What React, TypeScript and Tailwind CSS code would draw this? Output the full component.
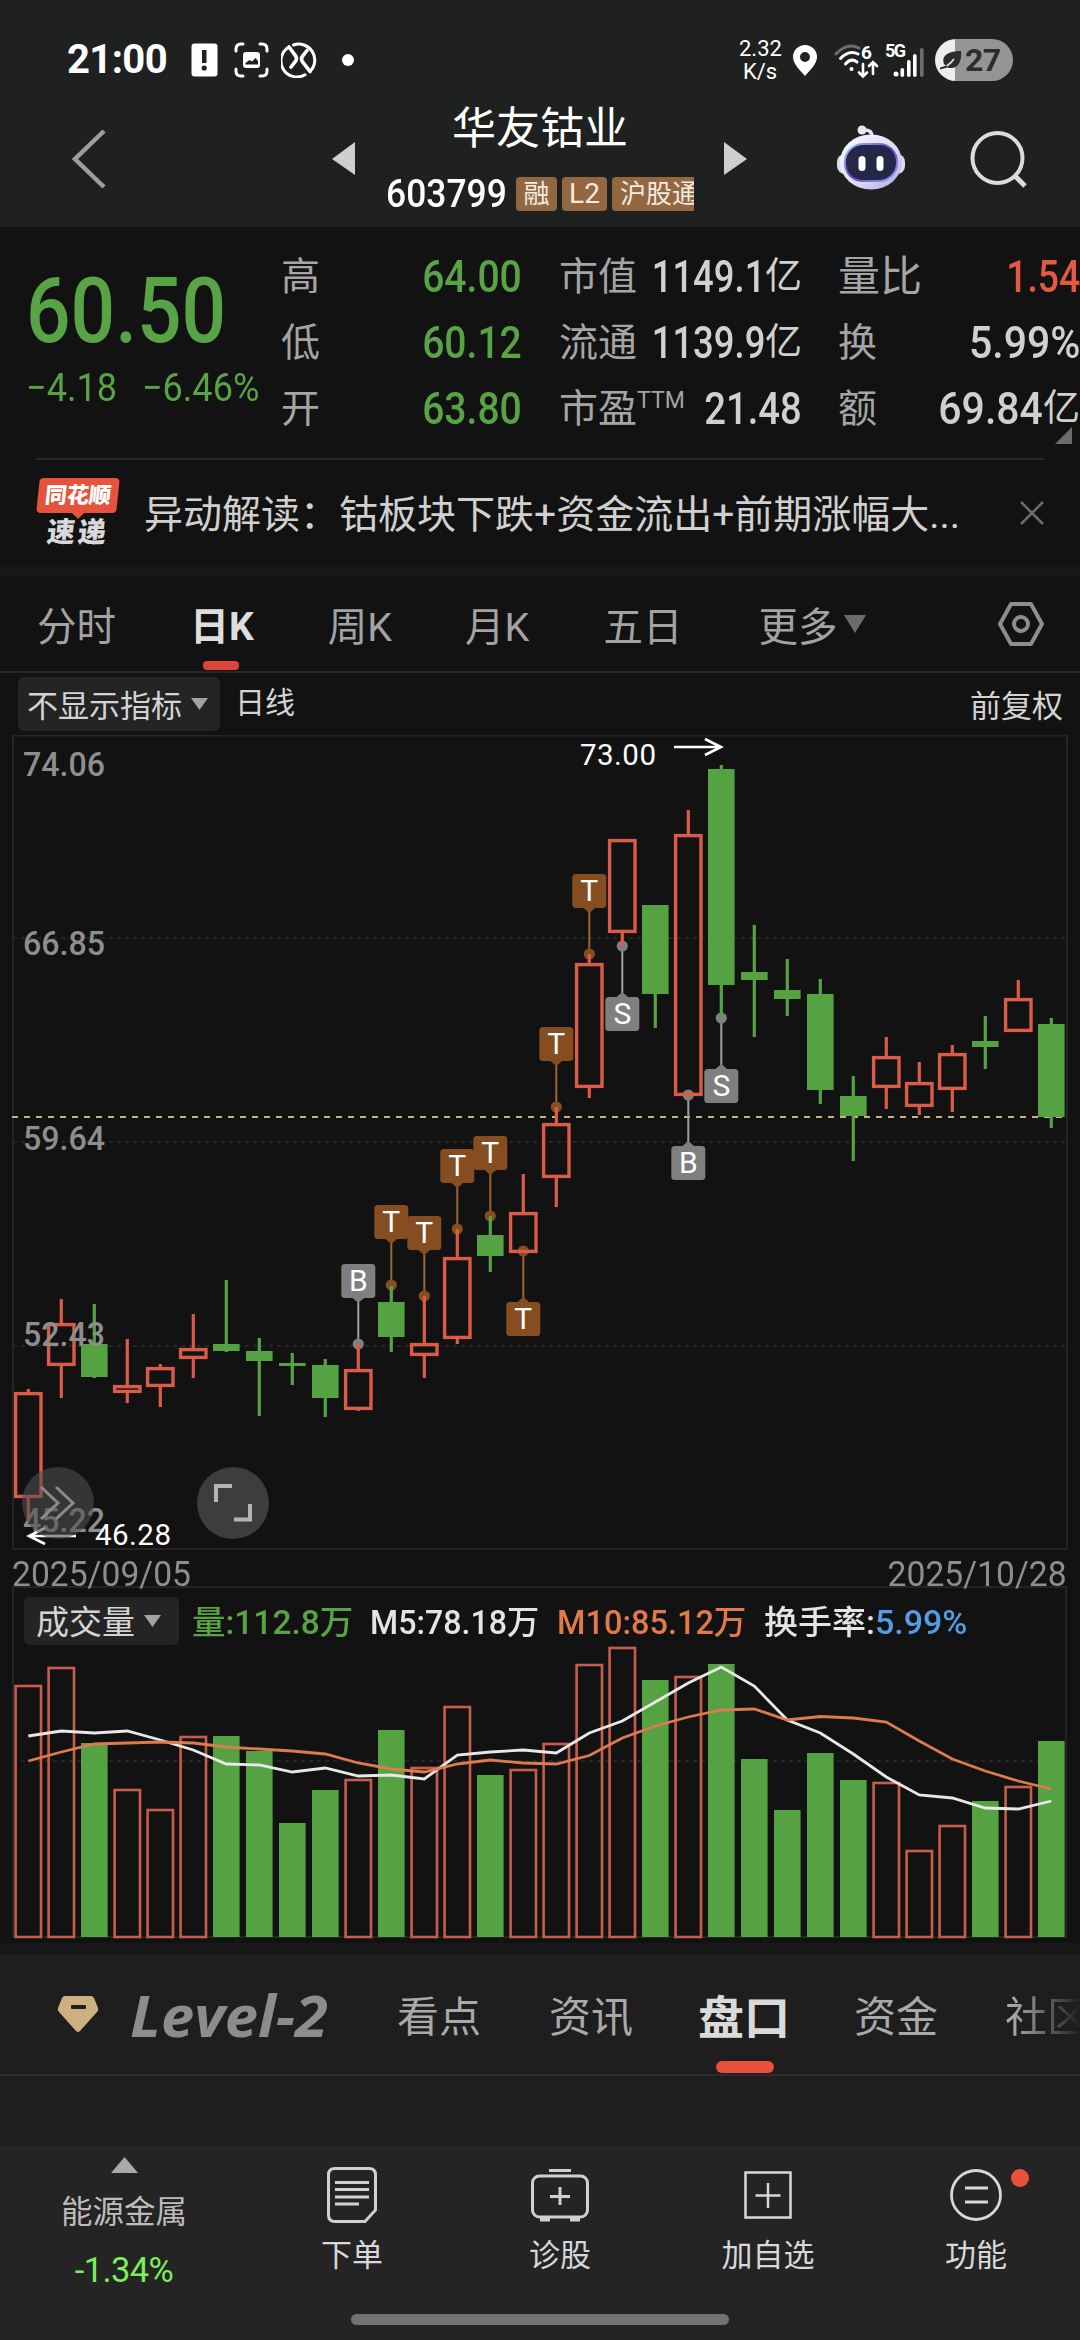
import type { ReactNode } from 'react';

const RED = '#d95b48';
const GREEN = '#55a243';
const STEP = 33;
const FIRST_X = 28.3;

// [up, high, bodyTop, bodyBottom, low] in chart coordinates
const candles: [boolean, number, number, number, number][] = [
  [true, 1389, 1392, 1498, 1522],
  [true, 1299, 1323, 1366, 1398],
  [false, 1304, 1344, 1377, 1378],
  [true, 1339, 1385, 1393, 1403],
  [true, 1364, 1367, 1387, 1407],
  [true, 1314, 1348, 1359, 1378],
  [false, 1280, 1344, 1351, 1352],
  [false, 1338, 1351, 1361, 1416],
  [false, 1353, 1363, 1366, 1385],
  [false, 1359, 1365, 1398, 1417],
  [true, 1344, 1369, 1410, 1411],
  [false, 1286, 1302, 1337, 1352],
  [true, 1296, 1343, 1356, 1378],
  [true, 1229, 1257, 1339, 1344],
  [false, 1216, 1235, 1256, 1272],
  [true, 1174, 1212, 1253, 1253],
  [true, 1107, 1123, 1178, 1207],
  [true, 954, 963, 1088, 1098],
  [true, 839, 839, 933, 946],
  [false, 905, 905, 994, 1028],
  [true, 810, 834, 1096, 1096],
  [false, 765, 769, 985, 1018],
  [false, 925, 972, 980, 1037],
  [false, 959, 990, 999, 1016],
  [false, 979, 994, 1090, 1104],
  [false, 1076, 1096, 1116, 1161],
  [true, 1037, 1056, 1088, 1109],
  [true, 1062, 1082, 1107, 1115],
  [true, 1045, 1053, 1090, 1112],
  [false, 1016, 1041, 1047, 1069],
  [true, 980, 998, 1032, 1032],
  [false, 1018, 1024, 1117, 1128],
];

const volumes = [
  1685, 1667, 1743, 1789, 1809, 1736, 1736, 1751, 1823, 1790, 1779, 1730, 1767, 1706, 1775, 1769,
  1743, 1664, 1647, 1680, 1676, 1664, 1759, 1810, 1753, 1780, 1782, 1850, 1825, 1801, 1786, 1741,
];

const ma5 = [
  1736, 1731, 1733, 1731, 1740, 1750, 1764, 1765, 1772, 1768, 1776, 1775, 1779, 1755, 1752, 1750,
  1753, 1733, 1721, 1702, 1683, 1667, 1686, 1720, 1733, 1754, 1777, 1795, 1798, 1808, 1809, 1801,
];

const ma10 = [
  1761, 1752, 1744, 1743, 1742, 1743, 1747, 1749, 1751, 1754, 1763, 1769, 1772, 1764, 1760, 1763,
  1764, 1755.5, 1738, 1726, 1717, 1710, 1709, 1720, 1716.5, 1718, 1722, 1741, 1759, 1771, 1781, 1789,
];

interface Marker {
  i: number;
  label: string;
  dot: number;
  below?: boolean;
}

const markers: Marker[] = [
  { i: 10, label: 'B', dot: 1344 },
  { i: 11, label: 'T', dot: 1285 },
  { i: 12, label: 'T', dot: 1296 },
  { i: 13, label: 'T', dot: 1229 },
  { i: 14, label: 'T', dot: 1216 },
  { i: 15, label: 'T', dot: 1251, below: true },
  { i: 16, label: 'T', dot: 1107 },
  { i: 17, label: 'T', dot: 954 },
  { i: 18, label: 'S', dot: 946, below: true },
  { i: 20, label: 'B', dot: 1095, below: true },
  { i: 21, label: 'S', dot: 1018, below: true },
];

const cx = (i: number) => FIRST_X + i * STEP;
const toPoints = (ys: number[]) => ys.map((y, i) => `${cx(i)},${y}`).join(' ');

function StatusBar() {
  return (
    <div className="flex h-[120px] items-center pl-[67px] pr-[67px] text-white">
      <span className="w-[101px] text-[40px] font-bold leading-none tracking-[-0.6px]">21:00</span>
      <svg className="ml-[23px]" width="27" height="34" viewBox="0 0 27 34">
        <rect x="0.5" y="0.5" width="26" height="33" rx="3" fill="#fff" />
        <rect x="11" y="7" width="4.5" height="13" fill="#1f2120" />
        <circle cx="13.2" cy="25" r="2.6" fill="#1f2120" />
      </svg>
      <svg className="ml-[16px]" width="35" height="36" viewBox="0 0 35 36" fill="none" stroke="#fff" strokeWidth="3" strokeLinecap="round">
        <path d="M2 9V7Q2 2 7 2H9M26 2h2q5 0 5 5v2M33 27v2q0 5-5 5h-2M9 34H7q-5 0-5-5v-2" />
        <rect x="9" y="10" width="17" height="16" rx="3" fill="#fff" stroke="none" />
        <path d="M11.500 22.500v-1.500l4-3 2.500 1.500 3.500-3.500 2.500 3v3.500z" fill="#1f2120" stroke="none" />
      </svg>
      <svg className="ml-[12px]" width="36" height="36" viewBox="0 0 36 36" fill="none" stroke="#fff" strokeWidth="3" strokeLinecap="round">
        <path d="M8 5A16 16 0 0 0 24 32.800M12.500 3A16 16 0 0 1 29 29.500" />
        <path d="M8 5l6 8q3 3.500 0 7l-4 5M29 29.500l-7-9q-3-3.500 0-7l4-5" strokeWidth="3.600" />
      </svg>
      <span className="ml-[25px] h-3 w-3 rounded-full bg-white" />
      <div className="ml-auto flex items-center">
        <div className="w-[42px] text-center text-[22px] leading-[23px]">
          <div>2.32</div>
          <div>K/s</div>
        </div>
        <svg className="ml-[12px]" width="24" height="31" viewBox="0 0 24 31">
          <path fillRule="evenodd" d="M12 0a12 12 0 0 0-12 12c0 7 7 13 12 19 5-6 12-12 12-19A12 12 0 0 0 12 0zm0 7a5 5 0 1 1 0 10 5 5 0 0 1 0-10z" fill="#fff" />
        </svg>
        <svg className="ml-[17px]" width="46" height="40" viewBox="0 -4 46 40" fill="none" stroke="#fff" strokeWidth="3" strokeLinecap="round">
          <path d="M2 10Q13-2 25 4" stroke="#6d6f6e" />
          <path d="M6.500 14.500Q15 5.500 24 10M11.500 20Q17 13.500 23 18" />
          <circle cx="17.500" cy="25" r="2" fill="#fff" stroke="none" />
          <path d="M29 20v12M25 28.500l4 4 4-4M39 30V18M35 22l4-4 4 4" strokeWidth="2.600" />
          <text x="27" y="15" fontSize="19" fontWeight="700" fill="#fff" stroke="none">6</text>
        </svg>
        <svg className="ml-[5px]" width="40" height="42" viewBox="0 -4 40 42" fill="#fff">
          <text x="0" y="14" fontSize="18" fontWeight="700" textLength="21">5G</text>
          <circle cx="11" cy="31" r="2.500" />
          <rect x="15.500" y="25" width="3.600" height="9" rx="1.800" />
          <rect x="22" y="17" width="3.600" height="17" rx="1.800" />
          <rect x="28" y="11" width="3.600" height="23" rx="1.800" />
          <rect x="35" y="5" width="3.600" height="29" rx="1.800" fill="#6d6f6e" />
        </svg>
        <div className="ml-[10px] flex h-[42px] w-[78px] items-center overflow-hidden rounded-full bg-[linear-gradient(90deg,#ededed_0_20px,#959595_20px)]">
          <svg className="ml-[5px]" width="22" height="20" viewBox="0 0 22 20">
            <path d="M4 14C1 5 9 1 21 1c1 9-2 17-10 17q-4 0-5-2z" fill="#2b2d2c" />
            <path d="M0 18.500Q8 17 14 9" stroke="#ededed" strokeWidth="1.600" fill="none" />
            <path d="M0 18.500l7-2" stroke="#2b2d2c" strokeWidth="2" />
          </svg>
          <span className="ml-[3px] text-[32px] font-bold leading-none tracking-[-0.5px] text-[#2b2d2c]">27</span>
        </div>
      </div>
    </div>
  );
}

function RobotIcon() {
  return (
    <svg width="70" height="66" viewBox="0 0 70 66">
      <defs>
        <linearGradient id="shell" x1="0" y1="0" x2="1" y2="1">
          <stop offset="0" stopColor="#fbfaff" />
          <stop offset="0.6" stopColor="#dcd9f3" />
          <stop offset="1" stopColor="#aaa6e0" />
        </linearGradient>
        <linearGradient id="rim" x1="0" y1="0" x2="1" y2="1">
          <stop offset="0" stopColor="#8fd3f0" />
          <stop offset="0.5" stopColor="#6b3fc9" />
          <stop offset="1" stopColor="#8fa8f5" />
        </linearGradient>
      </defs>
      <circle cx="26" cy="5" r="4.500" fill="#e6e4f5" />
      <path d="M27 5q9-1 9 7" stroke="#e6e4f5" strokeWidth="3.500" fill="none" />
      <rect x="1" y="29" width="68" height="20" rx="8" fill="#dddaf2" />
      <ellipse cx="35" cy="37" rx="31" ry="27.500" fill="url(#shell)" />
      <rect x="9" y="19" width="52" height="37" rx="18" fill="#232848" stroke="url(#rim)" strokeWidth="2" />
      <rect x="22.500" y="31" width="7" height="15" rx="3.500" fill="#fff" />
      <rect x="40.500" y="31" width="7" height="15" rx="3.500" fill="#fff" />
    </svg>
  );
}

function Badge({ children, className = '' }: { children: ReactNode; className?: string }) {
  return (
    <span className={`flex h-[34px] shrink-0 items-center justify-center rounded-[4px] bg-[#93673f] leading-none text-[#f3ece4] ${className}`}>
      {children}
    </span>
  );
}

function TitleBar() {
  return (
    <div className="flex h-[107px] pl-[71px] text-white">
      <svg className="mt-[9px]" width="35" height="60" viewBox="0 0 35 60" fill="none" stroke="#9c9d9d" strokeWidth="4.500">
        <path d="M33 2L4 30 33 58" />
      </svg>
      <svg className="ml-[226px] mt-[22px]" width="23" height="33" viewBox="0 0 23 33" fill="#cfcfcf">
        <path d="M23 0v33L0 17z" />
      </svg>
      <div className="ml-[31px] w-[308px]">
        <div className="mt-[-15px] h-[48px] text-center text-[44px] leading-[48px]">华友钴业</div>
        <div className="mt-[21px] flex h-[40px] items-center gap-[5px] overflow-hidden">
          <span className="w-[125px] shrink-0 origin-left scale-x-[0.92] text-[38.5px] font-medium leading-none">603799</span>
          <Badge className="w-[41px] text-[26px]">融</Badge>
          <Badge className="w-[45px] text-[28px]">L2</Badge>
          <Badge className="w-[90px] pl-1 text-[26px]">沪股通</Badge>
        </div>
      </div>
      <svg className="ml-[30px] mt-[22px]" width="23" height="33" viewBox="0 0 23 33" fill="#cfcfcf">
        <path d="M0 0v33l23-16z" />
      </svg>
      <div className="ml-[89px] mt-[5px]">
        <RobotIcon />
      </div>
      <svg className="ml-[64px] mt-[10px]" width="58" height="58" viewBox="0 0 58 58" fill="none" stroke="#dcdcdc" strokeWidth="4">
        <circle cx="27.500" cy="28" r="25" />
        <path d="M44 45l11 11" strokeWidth="5" />
      </svg>
    </div>
  );
}

interface StatProps {
  label: ReactNode;
  value: string;
  unit?: string;
  tone: string;
  fit?: string;
}

function Stat({ label, value, unit, tone, fit = 'scale-x-[0.868]' }: StatProps) {
  return (
    <div className="flex h-[66px] items-center justify-between whitespace-nowrap">
      <span className="pt-[2px] text-[39px] leading-none text-[#a5a5a5]">{label}</span>
      <span className={`-ml-6 flex items-center leading-none ${tone}`}>
        <span className={`origin-right text-[45px] font-medium leading-none ${fit}`}>{value}</span>
        {unit && <span className="text-[37px]">{unit}</span>}
      </span>
    </div>
  );
}

function Quote() {
  return (
    <div className="flex h-[231px] pt-[16px]">
      <div className="w-[255px] pl-[26px] text-[#58a345]">
        <div className="mt-[23px] h-[90px] origin-left scale-x-[0.862] whitespace-nowrap text-[91px] font-medium leading-[90px]">60.50</div>
        <div className="mt-[12px] flex h-[40px] origin-left scale-x-[0.925] gap-[27px] whitespace-nowrap text-[39px] leading-[40px]">
          <span>−4.18</span>
          <span>−6.46%</span>
        </div>
      </div>
      <div className="ml-[26px] w-[241px]">
        <Stat label="高" value="64.00" tone="text-[#58a345]" />
        <Stat label="低" value="60.12" tone="text-[#58a345]" />
        <Stat label="开" value="63.80" tone="text-[#58a345]" />
      </div>
      <div className="ml-[37px] w-[243px]">
        <Stat label="市值" value="1149.1" unit="亿" tone="text-[#d0d0d0]" fit="scale-x-[0.81]" />
        <Stat label="流通" value="1139.9" unit="亿" tone="text-[#d0d0d0]" fit="scale-x-[0.81]" />
        <Stat
          label={<>市盈<span className="relative -top-[14px] text-[23px]">TTM</span></>}
          value="21.48"
          tone="text-[#d0d0d0]"
          fit="scale-x-[0.85]"
        />
      </div>
      <div className="relative ml-[36px] w-[242px]">
        <Stat label={<span className="text-[42px]">量比</span>} value="1.54" tone="text-[#e25a43]" fit="scale-x-[0.83]" />
        <Stat label="换" value="5.99%" tone="text-[#d0d0d0]" fit="scale-x-[0.91]" />
        <Stat label="额" value="69.84" unit="亿" tone="text-[#d0d0d0]" fit="scale-x-[0.91]" />
        <svg className="absolute right-[8px] top-[184px]" width="17" height="17" viewBox="0 0 17 17" fill="#6b6b6b">
          <path d="M17 0v17H0z" />
        </svg>
      </div>
    </div>
  );
}

function NewsRow() {
  return (
    <div className="mx-9 flex h-[107px] items-center border-t-2 border-[#292929]">
      <div className="w-[84px]">
        <div className="mx-auto flex h-[35px] w-[80px] -skew-x-6 items-center justify-center rounded-[4px] bg-[#e5533f] text-[22px] font-black leading-none text-white">同花顺</div>
        <div className="mx-auto h-0 w-0 border-x-[6px] border-t-[6px] border-x-transparent border-t-[#e5533f]" />
        <div className="h-[28px] -skew-x-6 text-center text-[28px] font-black leading-[28px] tracking-[3px] text-[#d9d9d9]">速递</div>
      </div>
      <p className="ml-[24px] flex-1 whitespace-nowrap pt-[6px] text-[39px] leading-none text-[#d0d0d0]">异动解读：钴板块下跌+资金流出+前期涨幅大...</p>
      <svg width="24" height="24" viewBox="0 0 24 24" stroke="#6e6e6e" strokeWidth="2.500">
        <path d="M1 1l22 22M23 1L1 23" />
      </svg>
    </div>
  );
}

function PeriodTabs() {
  return (
    <div className="flex h-[96px] items-center border-b-2 border-[#272727] pl-[37px] pr-[36px] text-[39.5px] leading-none text-[#a3a3a3]">
      <span className="pt-[7px]">分时</span>
      <span className="relative ml-[74px] pt-[7px] text-[39px] font-bold text-[#dedede]">
        日K
        <span className="absolute left-[13px] top-[60px] h-[9px] w-[36px] rounded-[4px] bg-[#d8453a]" />
      </span>
      <span className="ml-[74px] pt-[7px]">周K</span>
      <span className="ml-[73px] pt-[7px]">月K</span>
      <span className="ml-[74px] pt-[7px]">五日</span>
      <span className="ml-[76px] pt-[7px]">更多</span>
      <svg className="ml-[7px]" width="22" height="18" viewBox="0 0 22 18" fill="#6c6c6c">
        <path d="M0 0h22L11 18z" />
      </svg>
      <svg className="ml-auto" width="46" height="44" viewBox="0 0 46 44" fill="none" stroke="#8d8d8d" strokeWidth="4" strokeLinejoin="round">
        <path d="M13 2h20l11 20-11 20H13L2 22z" />
        <circle cx="23" cy="22" r="7" />
      </svg>
    </div>
  );
}

function IndicatorRow() {
  return (
    <div className="flex h-[62px] items-center pl-[18px] pr-[17px] text-[31px] leading-none text-[#d4d4d4]">
      <div className="flex h-[54px] w-[202px] items-center rounded-md bg-[#242424] pl-[9px]">
        <span className="whitespace-nowrap pt-[5px]">不显示指标</span>
        <svg className="ml-[9px]" width="17" height="12" viewBox="0 0 17 12" fill="#a2a2a2">
          <path d="M0 0h17L8.500 12z" />
        </svg>
      </div>
      <span className="ml-[15px] mt-[-2px] text-[30px]">日线</span>
      <span className="ml-auto pt-[5px]">前复权</span>
    </div>
  );
}

function TradeMarker({ i, label, dot, below }: Marker) {
  const x = cx(i);
  const trade = label === 'T';
  const fill = trade ? '#854d20' : '#7f7f7f';
  const line = trade ? '#9c6635' : '#a0a0a0';
  const top = below ? dot + 51 : dot - 80;
  const tip = below
    ? `M${x - 7} ${top + 1}L${x} ${top - 5}L${x + 7} ${top + 1}z`
    : `M${x - 7} ${top + 33}L${x} ${top + 39}L${x + 7} ${top + 33}z`;
  return (
    <g>
      <path d={`M${x} ${below ? top : top + 34}V${dot}`} stroke={line} strokeWidth="2" />
      <circle cx={x} cy={dot} r="5.600" fill={fill} />
      <rect x={x - 17} y={top} width="34" height="34" rx="3.500" fill={fill} />
      <path d={tip} fill={fill} />
      <text x={x} y={top + 27} fontSize="30" fill="#fff" textAnchor="middle">{label}</text>
    </g>
  );
}

function CandleChart() {
  return (
    <svg className="block" width="1080" height="816" viewBox="0 735 1080 816">
      <rect x="13" y="735.500" width="1054" height="813.500" fill="none" stroke="#242424" strokeWidth="2" />
      {[938, 1142, 1346].map((y) => (
        <path key={y} d={`M13 ${y}H1066`} stroke="#242424" strokeWidth="2" strokeDasharray="4 4" />
      ))}
      <path d="M12 1117H1066" stroke="#c9b27f" strokeWidth="2" strokeDasharray="6 6" />
      {markers.map((m) => (
        <TradeMarker key={m.i} {...m} />
      ))}
      {candles.map(([up, high, top, bottom, low], i) => (
        <g key={i}>
          <path d={`M${cx(i)} ${high}V${top}M${cx(i)} ${bottom}V${low}`} stroke={up ? RED : GREEN} strokeWidth="3.200" />
          {up ? (
            <rect x={cx(i) - 12.700} y={top + 1.600} width="25.400" height={bottom - top - 3.200} fill="none" stroke={RED} strokeWidth="3.400" />
          ) : (
            <rect x={cx(i) - 13.300} y={top} width="26.600" height={bottom - top} fill={GREEN} />
          )}
        </g>
      ))}
      <g fill="#8e8e8e" fontSize="34" fontWeight="500">
        <text x="23" y="776" textLength="82" lengthAdjust="spacingAndGlyphs">74.06</text>
        <text x="23" y="955" textLength="82" lengthAdjust="spacingAndGlyphs">66.85</text>
        <text x="23" y="1150" textLength="82" lengthAdjust="spacingAndGlyphs">59.64</text>
        <text x="23" y="1346" textLength="82" lengthAdjust="spacingAndGlyphs">52.43</text>
        <text x="23" y="1532" textLength="82" lengthAdjust="spacingAndGlyphs">45.22</text>
      </g>
      <g fill="none" stroke="#fff" strokeWidth="2.600">
        <path d="M76 1536H29M45 1528L29 1536 45 1544" />
        <path d="M674 747H721M705 739L721 747 705 755" />
      </g>
      <circle cx="58" cy="1503" r="36" fill="#505050" fillOpacity="0.58" />
      <path d="M41 1487L58 1503 41 1519M56 1487L73 1503 56 1519" fill="none" stroke="#8a8a8a" strokeWidth="3" />
      <circle cx="233" cy="1503" r="36" fill="#3d3d3d" />
      <path d="M216 1502V1486H232M234 1519.500H250V1504" fill="none" stroke="#b5b5b5" strokeWidth="4" />
      <g fill="#fff" fontSize="29.500">
        <text x="95" y="1544.500" textLength="76">46.28</text>
        <text x="580" y="764.500" textLength="76">73.00</text>
      </g>
    </svg>
  );
}

function VolumePanel() {
  return (
    <div className="ml-[12px] mr-[13px] h-[352px] border-2 border-[#242424]">
      <div className="flex h-[65px] items-center whitespace-nowrap pl-[10px] pt-[3px] text-[33px] leading-none">
        <div className="-mt-[3px] flex h-[48px] w-[155px] items-center rounded-md bg-[#242424] pl-[12px] text-[#d4d4d4]">
          <span className="pt-[3px]">成交量</span>
          <svg className="ml-[9px]" width="17" height="12" viewBox="0 0 17 12" fill="#a2a2a2">
            <path d="M0 0h17L8.500 12z" />
          </svg>
        </div>
        <span className="ml-[13px] w-[178px] origin-left scale-x-[1.015] font-medium text-[#58a345]">量:112.8万</span>
        <span className="w-[187px] origin-left scale-x-[0.975] font-medium text-[#e4e4e4]">M5:78.18万</span>
        <span className="w-[207px] origin-left scale-x-[0.985] font-medium text-[#e07a4c]">M10:85.12万</span>
        <span className="origin-left scale-x-[1.03] font-medium text-[#e4e4e4]">
          换手率:<span className="text-[#559ce6]">5.99%</span>
        </span>
      </div>
      <svg className="-ml-[2px] block" width="1056" height="286" viewBox="12 1653 1056 286" overflow="visible">
        <path d="M13 1761H1066" stroke="#242424" strokeWidth="2" strokeDasharray="4 4" />
        {volumes.map((top, i) =>
          candles[i][0] ? (
            <rect key={i} x={cx(i) - 12.700} y={top + 1} width="25.400" height={1936 - top} fill="none" stroke="#c75d4c" strokeWidth="2.600" />
          ) : (
            <rect key={i} x={cx(i) - 13.300} y={top} width="26.600" height={1937 - top} fill={GREEN} />
          ),
        )}
        <polyline points={toPoints(ma5)} fill="none" stroke="#e8e8e8" strokeWidth="2.800" />
        <polyline points={toPoints(ma10)} fill="none" stroke="#dc7b50" strokeWidth="2.800" />
      </svg>
    </div>
  );
}

function SectionTabs() {
  return (
    <div className="flex h-[121px] items-center overflow-hidden whitespace-nowrap border-b-2 border-[#2d2d2d] pl-[57px] text-[42px] leading-none text-[#a9a9a9]">
      <svg className="shrink-0" width="42" height="37" viewBox="0 0 42 37">
        <path d="M8 0h26q2 0 3 2l4 10q1 2-1 4L23 35q-2 2-4 0L2 16q-2-2-1-4L5 2q1-2 3-2z" fill="#ccb081" />
        <rect x="14" y="9" width="15" height="4" rx="1" fill="#1e1e1e" />
      </svg>
      <span className="ml-[31px] w-[198px] shrink-0 origin-left scale-x-[1.03] font-['Open_Sans'] text-[58px] font-bold italic leading-none text-[#8c8c8c]">Level-2</span>
      <span className="ml-[69px] shrink-0 pt-[7px]">看点</span>
      <span className="ml-[68px] shrink-0 pt-[7px]">资讯</span>
      <span className="relative ml-[65px] shrink-0 pt-[7px] text-[46px] font-bold text-[#dadada]">
        盘口
        <span className="absolute left-[18px] top-[73px] h-[12px] w-[58px] rounded-[6px] bg-[#ea513d]" />
      </span>
      <span className="ml-[64px] shrink-0 pt-[7px]">资金</span>
      <span className="ml-[67px] w-[76px] shrink-0 bg-[linear-gradient(90deg,#a9a9a9_10%,#1e1e1e_100%)] bg-clip-text pt-[7px] text-transparent">社区</span>
    </div>
  );
}

function BottomItem({ icon, label }: { icon: ReactNode; label: string }) {
  return (
    <div className="flex w-[208px] flex-col items-center">
      <div className="flex h-[94px] items-center pt-[4px]">{icon}</div>
      <span className="text-[31px] leading-[32px]">{label}</span>
    </div>
  );
}

function BottomBar() {
  return (
    <div className="h-[194px] bg-[#242424]">
      <div className="flex h-[168px] text-[#d8d8d8]">
        <div className="flex w-[248px] flex-col items-center text-[31.5px]">
          <svg className="mt-[11px]" width="27" height="16" viewBox="0 0 27 16" fill="#a9a9a9">
            <path d="M13.500 0L27 16H0z" />
          </svg>
          <span className="mt-[24px] leading-[32px] text-[#bdbdbd]">能源金属</span>
          <span className="mt-[23px] text-[34.5px] leading-[36px] tracking-[-0.6px] text-[#7bee5a]">-1.34%</span>
        </div>
        <BottomItem
          label="下单"
          icon={
            <svg width="50" height="56" viewBox="0 0 50 56" fill="none" stroke="#d0d0d0" strokeWidth="3">
              <path d="M8 1.500H42Q48.500 1.500 48.500 8V43L38 54.500H8Q1.500 54.500 1.500 48V8Q1.500 1.500 8 1.500z" />
              <path d="M8 15.500H42M8 22.500H42M8 30H42M8 37H32" />
            </svg>
          }
        />
        <BottomItem
          label="诊股"
          icon={
            <svg width="58" height="54" viewBox="0 0 58 54" fill="none" stroke="#d0d0d0" strokeWidth="3">
              <rect x="1.500" y="8" width="55" height="41" rx="7" />
              <path d="M18 2.500H40M29 19v18M19 28.500H39" />
              <path d="M9 51.500H19M39 51.500H49" strokeWidth="4" />
            </svg>
          }
        />
        <BottomItem
          label="加自选"
          icon={
            <svg width="48" height="48" viewBox="0 0 48 48" fill="none" stroke="#d8d8d8" strokeWidth="2.500">
              <rect x="1.500" y="1.500" width="45" height="45" />
              <path d="M24 12v25M11.500 24.500h25" />
            </svg>
          }
        />
        <BottomItem
          label="功能"
          icon={
            <span className="relative">
              <svg width="52" height="52" viewBox="0 0 52 52" fill="none" stroke="#d8d8d8" strokeWidth="2.800">
                <circle cx="26" cy="26" r="24.500" />
                <path d="M15 19h23M15 33h23" />
              </svg>
              <span className="absolute -right-[27px] top-0 h-[18px] w-[18px] rounded-full bg-[#ea513d]" />
            </span>
          }
        />
      </div>
      <div className="mx-auto h-[11px] w-[378px] rounded-full bg-[#737373]" />
    </div>
  );
}

export default function App() {
  return (
    <div className="h-[2340px] w-[1080px] overflow-hidden bg-[#121212] font-[Roboto,'Noto_Sans_CJK_SC',sans-serif]">
      <header className="bg-[#1f2120]">
        <StatusBar />
        <TitleBar />
      </header>
      <Quote />
      <NewsRow />
      <div className="h-[12px] bg-[#171717]" />
      <PeriodTabs />
      <IndicatorRow />
      <CandleChart />
      <div className="flex h-[35px] justify-between pl-[12px] pr-[13px] pt-[4px] text-[34.5px] leading-[38px] text-[#8e8e8e]">
        <span className="origin-left scale-x-[0.975]">2025/09/05</span>
        <span className="origin-right scale-x-[0.975]">2025/10/28</span>
      </div>
      <VolumePanel />
      <div className="mt-[5px] h-[12px] bg-[#171717]" />
      <div className="h-[191px] bg-[#1e1e1e]">
        <SectionTabs />
      </div>
      <BottomBar />
    </div>
  );
}
